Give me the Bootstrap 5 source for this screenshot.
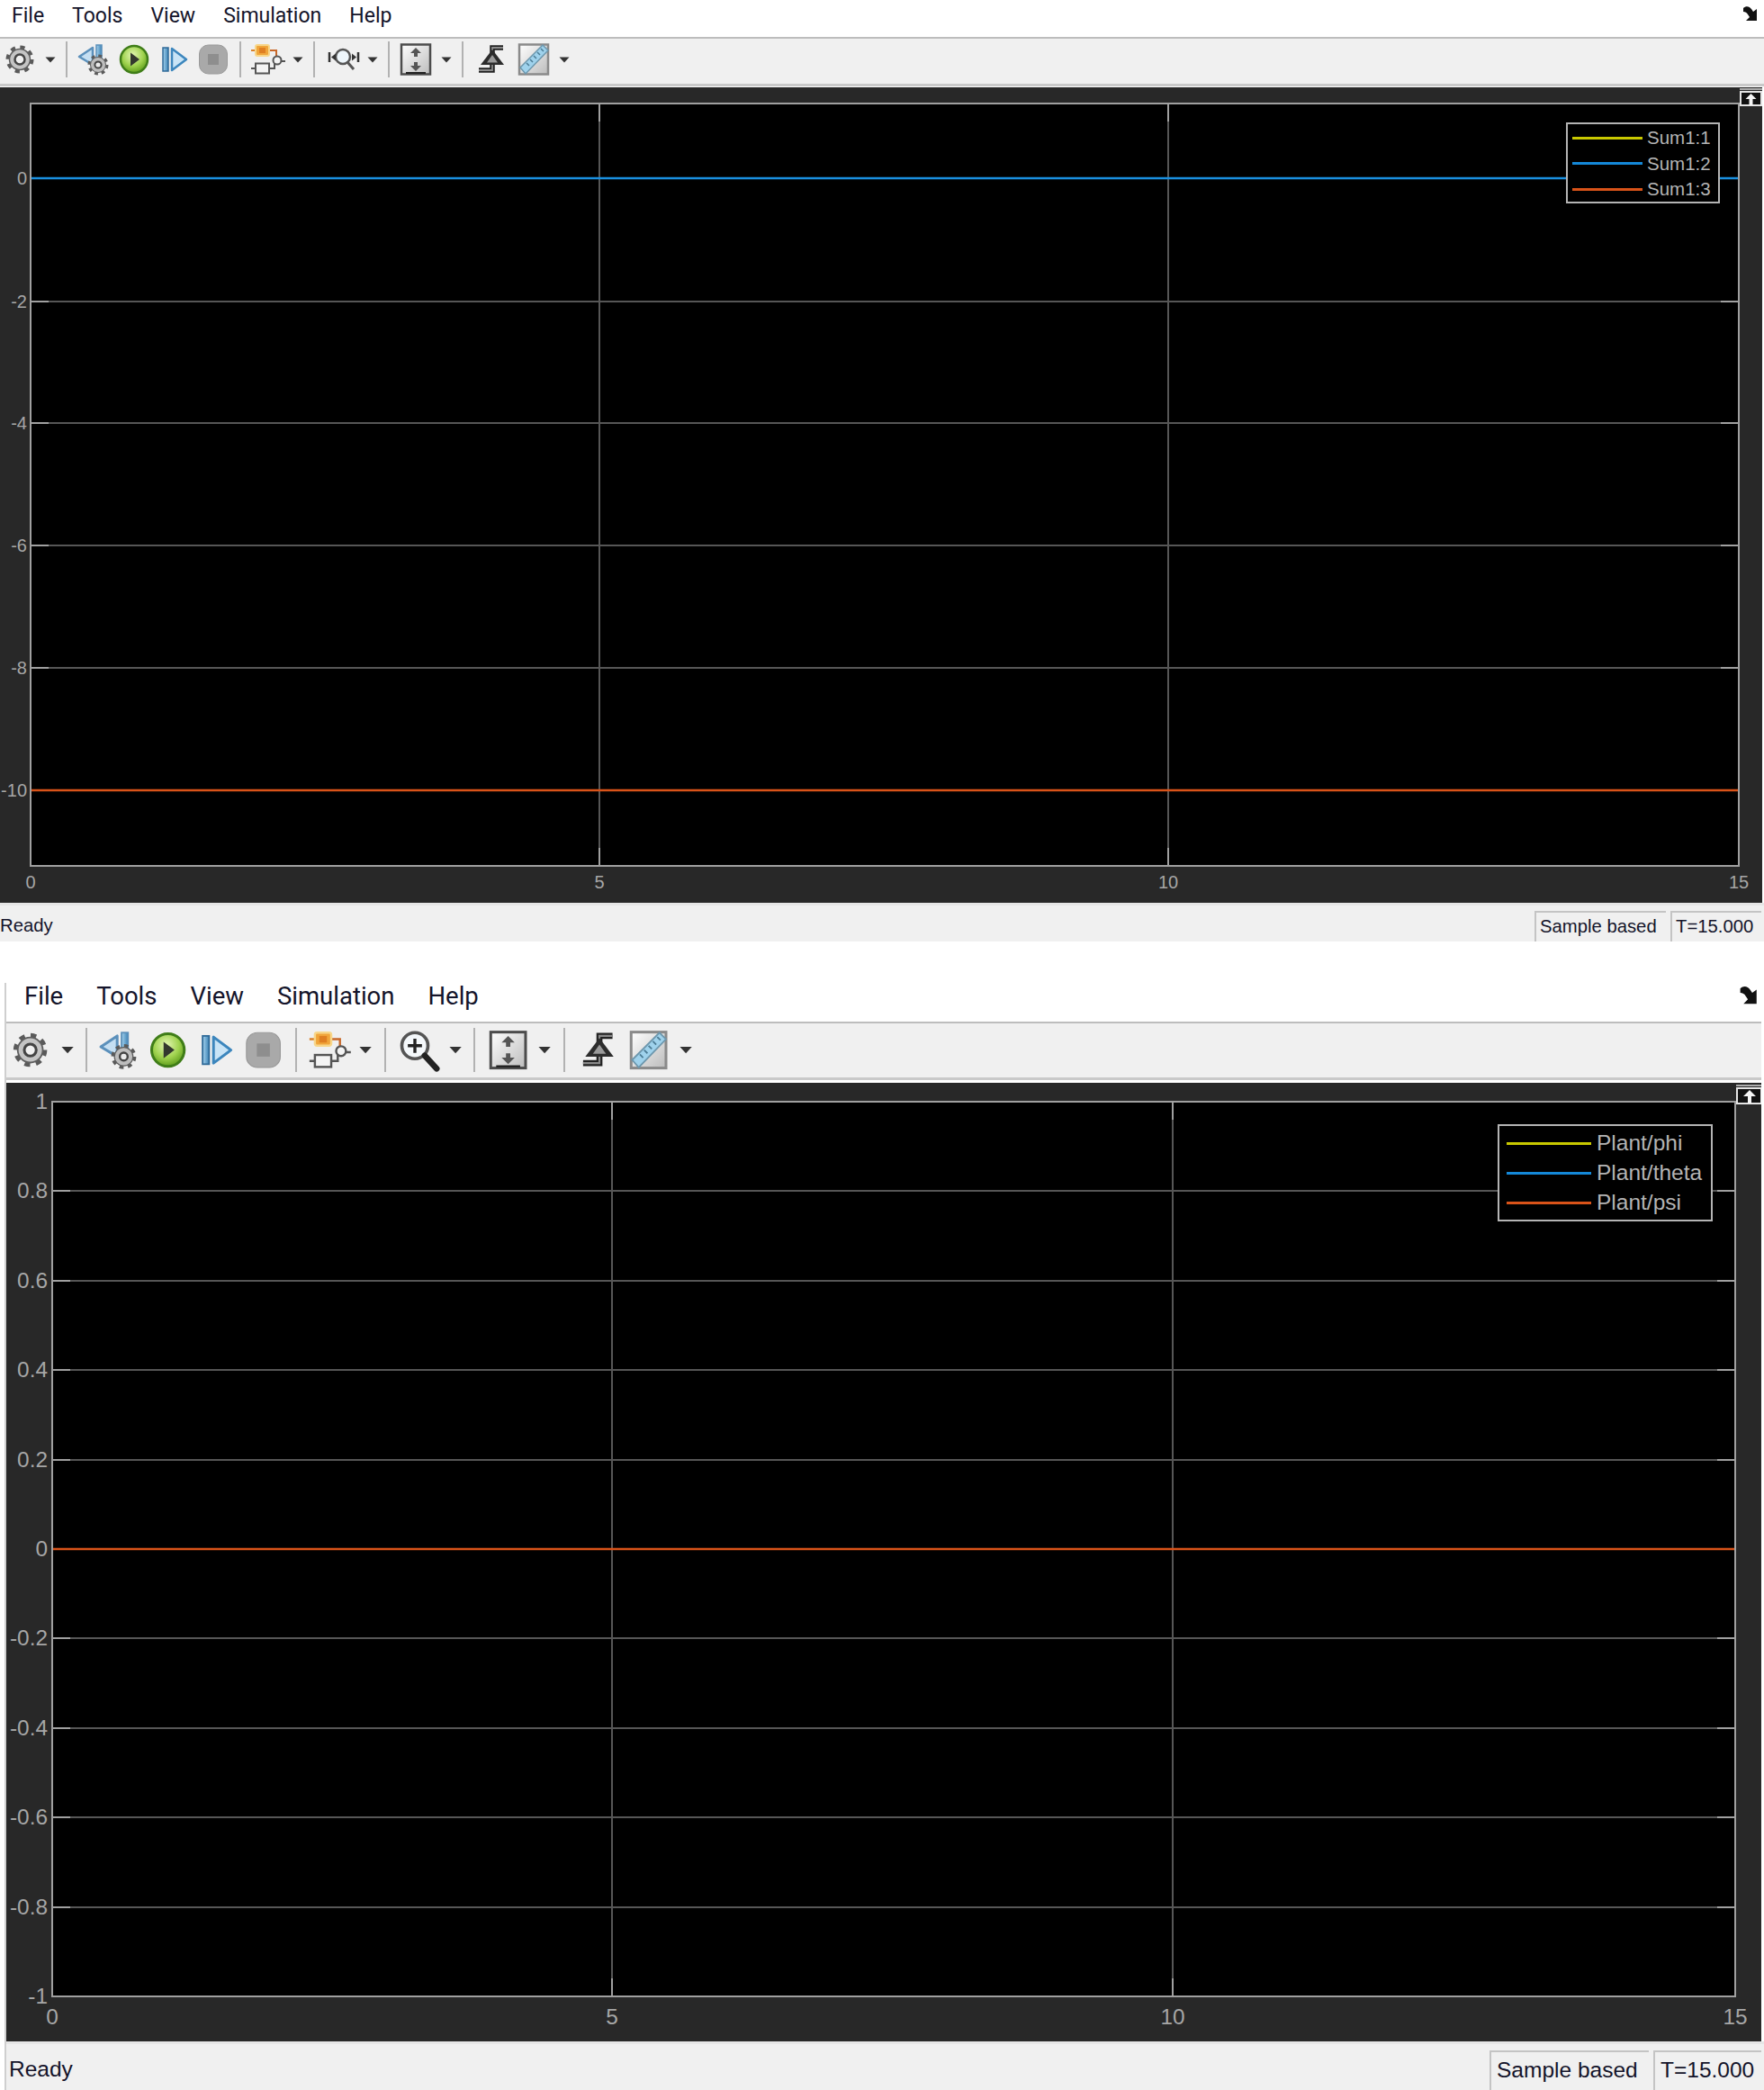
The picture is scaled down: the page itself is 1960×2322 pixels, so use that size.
<!DOCTYPE html>
<html lang="en">
<head>
  <meta charset="UTF-8">
  <meta name="viewport" content="width=device-width, initial-scale=1.0">
  <title>Scope</title>
  <link href="https://cdn.jsdelivr.net/npm/bootstrap@5.3.0/dist/css/bootstrap.min.css" rel="stylesheet">
  <style>
    body {
      margin: 0;
      background: #fff;
      font-family: "Liberation Sans", Arial, sans-serif;
    }
    /* both scopes share one layout, --k scales the chrome of the second */
    .scope-one {
      --k: 1;
      --menu-font: 23px;
      --menu-gap: 31px;
      --menu-h: 41px;
      --menu-lift: 6px;
      --tool-h: 55px;
      --tool-lift: 4px;
      --plot-h: 906px;
      --status-h: 40px;
      --status-font: 20.300px;
      width: 1960px;
    }
    .scope-two {
      --k: 1.210;
      --menu-font: 27.500px;
      --menu-gap: 37px;
      --menu-h: 43px;
      --menu-lift: 14px;
      --tool-h: 65px;
      --tool-lift: 1px;
      --plot-h: 1065px;
      --status-h: 51px;
      --status-font: 24.500px;
      width: 1952px;
      margin-top: 46px;
      margin-left: 5px;
      border-left: 2px solid #cfcfcf;
    }
    .menu-bar {
      height: var(--menu-h);
      padding-bottom: var(--menu-lift);
      gap: var(--menu-gap);
      font-family: Roboto, "Liberation Sans", sans-serif;
      font-size: var(--menu-font);
      line-height: 1;
    }
    .scope-one .menu-bar { padding-left: 13px; }
    .scope-two .menu-bar { padding-left: 20px; }
    .menu-bar .nav-link {
      padding: 0;
      color: #14142a;
    }
    .dock-arrow {
      width: calc(22px * var(--k));
      height: calc(22px * var(--k));
      align-self: flex-start;
    }
    .scope-one .dock-arrow { margin: 3px 4px 0 0; }
    .scope-two .dock-arrow { margin: -1px 0 0 0; }
    .tool-bar {
      height: var(--tool-h);
      padding-bottom: var(--tool-lift);
      background: #f0f0f0;
      border-top: 2px solid #bdbdbd;
      border-bottom: 3px solid #c9c9c9;
    }
    .tool-btn {
      width: calc(44px * var(--k));
      height: calc(44px * var(--k));
      flex: none;
      border-radius: 0;
    }
    .tool-btn svg { display: block; width: 100%; height: 100%; }
    .drop-btn {
      width: calc(20px * var(--k));
      height: calc(20px * var(--k));
      margin-left: calc(2px * var(--k));
      flex: none;
    }
    .drop-btn svg { display: block; width: 100%; height: 100%; }
    .tool-sep {
      width: 2px;
      height: calc(40px * var(--k));
      margin: 0 calc(7.500px * var(--k)) 0 calc(7px * var(--k));
      background: #b2b2b2;
      flex: none;
    }
    .plot-box {
      height: var(--plot-h);
      margin-top: 1px;
      background: #282828;
    }
    .scope-one .plot-box { width: 1958px; }
    .scope-two .plot-box { width: 1950px; margin-top: 3px; }
    .plot-box > svg { display: block; width: 100%; height: 100%; }
    .grid-line { stroke: #565656; stroke-width: 2; fill: none; }
    .tick-mark { stroke: #a0a0a0; stroke-width: 2; fill: none; }
    .tick-text { fill: #a6a6a6; font-family: "Liberation Sans", Arial, sans-serif; }
    .scope-one .tick-text { font-size: 20px; }
    .scope-two .tick-text { font-size: 24.400px; }
    .scope-legend {
      background: #000;
      border: 2px solid #b4b4b4;
      color: #b4b4b4;
      line-height: 1;
    }
    .scope-one .scope-legend {
      left: 1740px;
      top: 39px;
      width: 171px;
      height: 90px;
      padding: 1px 0 0 5px;
      font-size: 20.500px;
    }
    .scope-two .scope-legend {
      left: 1657px;
      top: 46px;
      width: 239px;
      height: 108px;
      padding: 3px 0 0 8px;
      font-size: 24.500px;
    }
    .scope-one .legend-row { height: 28.500px; gap: 5px; }
    .scope-two .legend-row { height: 33px; gap: 6px; }
    .legend-swatch { height: 3px; flex: none; }
    .scope-one .legend-swatch { width: 78px; }
    .scope-two .legend-swatch { width: 94px; }
    .status-row {
      height: var(--status-h);
      background: #f0f0f0;
      border-top: 3px solid #e6e6e6;
      box-sizing: content-box;
      color: #14142a;
      font-size: var(--status-font);
      line-height: 1;
    }
    .scope-one .status-row { width: 1960px; }
    .scope-two .status-row { width: 1950px; padding-left: 3px; }
    .status-ready { padding-top: 5px; }
    .status-cell {
      padding-bottom: 2px;
      border-top: 2px solid #c4c4c4;
      border-left: 2px solid #c4c4c4;
    }
    .scope-one .status-cell { height: 34px; margin-left: 5px; padding-left: 4px; }
    .scope-one .cell-mode { width: 146px; }
    .scope-one .cell-time { width: 101px; margin-right: 3px; }
    .scope-two .status-cell { height: 44px; margin-left: 5px; padding-left: 6px; }
    .scope-two .cell-mode { width: 177px; }
    .scope-two .cell-time { width: 120px; margin-right: 3px; }
  </style>
</head>
<body>

  <svg width="0" height="0" class="position-absolute">
    <defs>
      <radialGradient id="greenFill" cx="45%" cy="35%" r="65%">
        <stop offset="0" stop-color="#e4f7b4"/>
        <stop offset="0.6" stop-color="#9fd24e"/>
        <stop offset="1" stop-color="#5f9e1c"/>
      </radialGradient>
      <linearGradient id="greyFade" x1="0" y1="0" x2="1" y2="1">
        <stop offset="0" stop-color="#ffffff"/>
        <stop offset="1" stop-color="#bcbcbc"/>
      </linearGradient>
      <linearGradient id="blueBar" x1="0" y1="0" x2="1" y2="0">
        <stop offset="0" stop-color="#a6d3ee"/>
        <stop offset="1" stop-color="#3d83b5"/>
      </linearGradient>
      <symbol id="ico-caret" viewBox="0 0 20 20"><path d="M4.500 7.500h11l-5.500 6z" fill="#333"/></symbol>
      <symbol id="ico-gear" viewBox="0 0 44 44">
        <circle cx="22" cy="22" r="13" fill="none" stroke="#5a5a5a" stroke-width="5" stroke-dasharray="5 5.200"/>
        <circle cx="22" cy="22" r="11.500" fill="#c4c4c4" stroke="#5e5e5e" stroke-width="1.500"/>
        <circle cx="22" cy="22" r="5.500" fill="#f0f0f0" stroke="#444" stroke-width="2.500"/>
      </symbol>
      <symbol id="ico-back" viewBox="0 0 44 44">
        <path d="M5 19L20 9v19z" fill="#c5dff2" stroke="#5b90bb" stroke-width="2.500" stroke-linejoin="round"/>
        <rect x="24" y="6" width="6" height="19" fill="url(#blueBar)" stroke="#5b90bb" stroke-width="1.500"/>
        <circle cx="26" cy="28" r="9.500" fill="none" stroke="#5a5a5a" stroke-width="4" stroke-dasharray="3.700 3.760"/>
        <circle cx="26" cy="28" r="8.500" fill="#bdbdbd" stroke="#5e5e5e"/>
        <circle cx="26" cy="28" r="3.600" fill="#eaeaea" stroke="#444" stroke-width="2"/>
      </symbol>
      <symbol id="ico-play" viewBox="0 0 44 44">
        <circle cx="22" cy="22" r="15" fill="url(#greenFill)" stroke="#3f7d18" stroke-width="2.500"/>
        <path d="M18 14.500l10 7.500-10 7.500z" fill="#33382e"/>
      </symbol>
      <symbol id="ico-step" viewBox="0 0 44 44">
        <rect x="10" y="9" width="6" height="26" fill="url(#blueBar)" stroke="#2f6a98" stroke-width="1.500"/>
        <path d="M20 10l16 12-16 12z" fill="#c9e4f6" stroke="#3c86bd" stroke-width="2.500" stroke-linejoin="round"/>
      </symbol>
      <symbol id="ico-stop" viewBox="0 0 44 44">
        <rect x="6.500" y="6" width="31" height="32" rx="10" fill="#a9a9a9" stroke="#9a9a9a"/>
        <rect x="16" y="16" width="12" height="12" fill="#8e8e8e"/>
      </symbol>
      <symbol id="ico-library" viewBox="0 0 44 44">
        <path d="M24 12h8v9" fill="none" stroke="#c8682a" stroke-width="2"/>
        <path d="M4 12h5" fill="none" stroke="#d9822b" stroke-width="2"/>
        <rect x="9" y="6" width="15" height="12" rx="2" fill="#f0a53a" stroke="#f7d68a" stroke-width="2"/>
        <path d="M13 9h7v6h-7z" fill="#df7f22"/>
        <path d="M4 32h5M24 32h6v-7h1M37 24h5" fill="none" stroke="#555" stroke-width="2"/>
        <rect x="9" y="26.500" width="15" height="11" fill="#f4f4f4" stroke="#555" stroke-width="2"/>
        <circle cx="33" cy="23" r="4.500" fill="#f4f4f4" stroke="#555" stroke-width="2"/>
      </symbol>
      <symbol id="ico-zoomx" viewBox="0 0 44 44">
        <circle cx="23" cy="19" r="8" fill="#eef6fb" stroke="#555" stroke-width="2.500"/>
        <path d="M28 25l7 8" stroke="#555" stroke-width="3"/>
        <path d="M8 14v11M40 14v11" stroke="#333" stroke-width="2.500"/>
        <path d="M10 19.500l5-4v8zM38 19.500l-5-4v8z" fill="#333"/>
      </symbol>
      <symbol id="ico-zoomin" viewBox="0 0 44 44">
        <circle cx="19" cy="18" r="12" fill="#f4f8fb" stroke="#555" stroke-width="3"/>
        <path d="M28 27l11 12" stroke="#222" stroke-width="5.500" stroke-linecap="round"/>
        <path d="M19 11.500v13M12.500 18h13" stroke="#222" stroke-width="2.800"/>
      </symbol>
      <symbol id="ico-scale" viewBox="0 0 44 44">
        <rect x="6" y="5.500" width="32" height="33" fill="url(#greyFade)" stroke="#4c4c4c" stroke-width="2.500"/>
        <path d="M22 9l6 6h-4v4h-4v-4h-4z" fill="#555"/>
        <path d="M22 35l6-6h-4v-4h-4v4h-4z" fill="#555"/>
        <path d="M11 37h22" stroke="#222" stroke-width="2"/>
      </symbol>
      <symbol id="ico-signal" viewBox="0 0 44 44">
        <path d="M36 9H24V34H9" fill="none" stroke="#222" stroke-width="5.500"/>
        <path d="M36 9H24V34H9" fill="none" stroke="#8a8a8a" stroke-width="1.800"/>
        <path d="M24 11L11 28H37z" fill="#2c2c2c"/>
        <path d="M24 17L18 25.500H30z" fill="#9a9a9a"/>
      </symbol>
      <symbol id="ico-ruler" viewBox="0 0 44 44">
        <rect x="6" y="5.500" width="32" height="33" fill="url(#greyFade)" stroke="#8a8a8a" stroke-width="2.500"/>
        <path d="M7 31L32 6l6 6-25 26z" fill="#9fd2ec" stroke="#6d97ad" stroke-width="1.500"/>
        <path d="M14 26l3 3M18 22l3 3M22 18l3 3M26 14l3 3M30 10l3 3" stroke="#4d7d96" stroke-width="1.500"/>
      </symbol>
      <symbol id="ico-dock" viewBox="0 0 22 22">
        <path d="M3 6c3-3 7-2 9 1l2 3 4-3v13H6l4-4-2-3C7 11 5 10 3 10z" fill="#111"/>
      </symbol>
    </defs>
  </svg>

  <!-- first scope: Sum1 -->
  <section class="scope-one">
    <nav class="nav menu-bar align-items-center">
      <a class="nav-link" href="#">File</a>
      <a class="nav-link" href="#">Tools</a>
      <a class="nav-link" href="#">View</a>
      <a class="nav-link" href="#">Simulation</a>
      <a class="nav-link" href="#">Help</a>
      <svg class="dock-arrow ms-auto"><use href="#ico-dock"/></svg>
    </nav>
    <div class="tool-bar d-flex align-items-center">
      <button class="btn tool-btn p-0 border-0"><svg><use href="#ico-gear"/></svg></button>
      <span class="drop-btn"><svg><use href="#ico-caret"/></svg></span>
      <span class="tool-sep"></span>
      <button class="btn tool-btn p-0 border-0"><svg><use href="#ico-back"/></svg></button>
      <button class="btn tool-btn p-0 border-0"><svg><use href="#ico-play"/></svg></button>
      <button class="btn tool-btn p-0 border-0"><svg><use href="#ico-step"/></svg></button>
      <button class="btn tool-btn p-0 border-0"><svg><use href="#ico-stop"/></svg></button>
      <span class="tool-sep"></span>
      <button class="btn tool-btn p-0 border-0"><svg><use href="#ico-library"/></svg></button>
      <span class="drop-btn"><svg><use href="#ico-caret"/></svg></span>
      <span class="tool-sep"></span>
      <button class="btn tool-btn p-0 border-0"><svg><use href="#ico-zoomx"/></svg></button>
      <span class="drop-btn"><svg><use href="#ico-caret"/></svg></span>
      <span class="tool-sep"></span>
      <button class="btn tool-btn p-0 border-0"><svg><use href="#ico-scale"/></svg></button>
      <span class="drop-btn"><svg><use href="#ico-caret"/></svg></span>
      <span class="tool-sep"></span>
      <button class="btn tool-btn p-0 border-0"><svg><use href="#ico-signal"/></svg></button>
      <button class="btn tool-btn p-0 border-0 ms-1"><svg><use href="#ico-ruler"/></svg></button>
      <span class="drop-btn"><svg><use href="#ico-caret"/></svg></span>
    </div>
    <div class="plot-box position-relative">
      <svg viewBox="0 97 1958 906">
        <rect x="34" y="115" width="1898" height="847" fill="#000"/>
        <path class="grid-line" d="M34 198H1932M34 335H1932M34 470H1932M34 606H1932M34 742H1932M34 878H1932M666 115V962M1298 115V962"/>
        <path class="tick-mark" d="M34 335h20M34 470h20M34 606h20M34 742h20M34 878h20M1932 335h-20M1932 470h-20M1932 606h-20M1932 742h-20M666 962v-20M1298 962v-20M666 115v20M1298 115v20"/>
        <path d="M34 198H1932" stroke="#1a90e0" stroke-width="2.500"/>
        <path d="M34 878H1932" stroke="#d95319" stroke-width="2.500"/>
        <rect x="34" y="115" width="1898" height="847" fill="none" stroke="#a0a0a0" stroke-width="2"/>
        <g class="tick-text" text-anchor="end">
          <text x="30" y="205">0</text>
          <text x="30" y="342">-2</text>
          <text x="30" y="477">-4</text>
          <text x="30" y="613">-6</text>
          <text x="30" y="749">-8</text>
          <text x="30" y="885">-10</text>
        </g>
        <g class="tick-text" text-anchor="middle">
          <text x="34" y="987">0</text>
          <text x="666" y="987">5</text>
          <text x="1298" y="987">10</text>
          <text x="1932" y="987">15</text>
        </g>
        <g>
          <path d="M1933 99H1958" stroke="#d8d8d8" stroke-width="1.500"/>
          <rect x="1934" y="102" width="23" height="15" fill="#111" stroke="#e4e4e4" stroke-width="2"/>
          <path d="M1945.500 104l-6 6h4v7h4v-7h4z" fill="#f4f4f4"/>
        </g>
      </svg>
      <div class="scope-legend position-absolute">
        <div class="legend-row d-flex align-items-center"><span class="legend-swatch" style="background:#c8c800"></span>Sum1:1</div>
        <div class="legend-row d-flex align-items-center"><span class="legend-swatch" style="background:#1488d8"></span>Sum1:2</div>
        <div class="legend-row d-flex align-items-center"><span class="legend-swatch" style="background:#d95319"></span>Sum1:3</div>
      </div>
    </div>
    <div class="status-row d-flex align-items-end">
      <span class="status-ready me-auto align-self-center">Ready</span>
      <span class="status-cell cell-mode d-flex align-items-center">Sample based</span>
      <span class="status-cell cell-time d-flex align-items-center">T=15.000</span>
    </div>
  </section>

  <!-- second scope: Plant -->
  <section class="scope-two">
    <nav class="nav menu-bar align-items-center">
      <a class="nav-link" href="#">File</a>
      <a class="nav-link" href="#">Tools</a>
      <a class="nav-link" href="#">View</a>
      <a class="nav-link" href="#">Simulation</a>
      <a class="nav-link" href="#">Help</a>
      <svg class="dock-arrow ms-auto"><use href="#ico-dock"/></svg>
    </nav>
    <div class="tool-bar d-flex align-items-center">
      <button class="btn tool-btn p-0 border-0"><svg><use href="#ico-gear"/></svg></button>
      <span class="drop-btn"><svg><use href="#ico-caret"/></svg></span>
      <span class="tool-sep"></span>
      <button class="btn tool-btn p-0 border-0"><svg><use href="#ico-back"/></svg></button>
      <button class="btn tool-btn p-0 border-0"><svg><use href="#ico-play"/></svg></button>
      <button class="btn tool-btn p-0 border-0"><svg><use href="#ico-step"/></svg></button>
      <button class="btn tool-btn p-0 border-0"><svg><use href="#ico-stop"/></svg></button>
      <span class="tool-sep"></span>
      <button class="btn tool-btn p-0 border-0"><svg><use href="#ico-library"/></svg></button>
      <span class="drop-btn"><svg><use href="#ico-caret"/></svg></span>
      <span class="tool-sep"></span>
      <button class="btn tool-btn p-0 border-0"><svg><use href="#ico-zoomin"/></svg></button>
      <span class="drop-btn"><svg><use href="#ico-caret"/></svg></span>
      <span class="tool-sep"></span>
      <button class="btn tool-btn p-0 border-0"><svg><use href="#ico-scale"/></svg></button>
      <span class="drop-btn"><svg><use href="#ico-caret"/></svg></span>
      <span class="tool-sep"></span>
      <button class="btn tool-btn p-0 border-0"><svg><use href="#ico-signal"/></svg></button>
      <button class="btn tool-btn p-0 border-0 ms-1"><svg><use href="#ico-ruler"/></svg></button>
      <span class="drop-btn"><svg><use href="#ico-caret"/></svg></span>
    </div>
    <div class="plot-box position-relative">
      <svg viewBox="7 1203 1950 1065">
        <rect x="58" y="1224" width="1870" height="994" fill="#000"/>
        <path class="grid-line" d="M58 1323H1928M58 1423H1928M58 1522H1928M58 1622H1928M58 1721H1928M58 1820H1928M58 1920H1928M58 2019H1928M58 2119H1928M680 1224V2218M1303 1224V2218"/>
        <path class="tick-mark" d="M58 1323h20M58 1423h20M58 1522h20M58 1622h20M58 1820h20M58 1920h20M58 2019h20M58 2119h20M1928 1323h-20M1928 1423h-20M1928 1522h-20M1928 1622h-20M1928 1820h-20M1928 1920h-20M1928 2019h-20M1928 2119h-20M680 2218v-20M1303 2218v-20M680 1224v20M1303 1224v20"/>
        <path d="M58 1721H1928" stroke="#d95319" stroke-width="2.500"/>
        <rect x="58" y="1224" width="1870" height="994" fill="none" stroke="#a0a0a0" stroke-width="2"/>
        <g class="tick-text" text-anchor="end">
          <text x="53" y="1232">1</text>
          <text x="53" y="1331">0.8</text>
          <text x="53" y="1431">0.6</text>
          <text x="53" y="1530">0.4</text>
          <text x="53" y="1630">0.2</text>
          <text x="53" y="1729">0</text>
          <text x="53" y="1828">-0.2</text>
          <text x="53" y="1928">-0.4</text>
          <text x="53" y="2027">-0.6</text>
          <text x="53" y="2127">-0.8</text>
          <text x="53" y="2226">-1</text>
        </g>
        <g class="tick-text" text-anchor="middle">
          <text x="58" y="2249">0</text>
          <text x="680" y="2249">5</text>
          <text x="1303" y="2249">10</text>
          <text x="1928" y="2249">15</text>
        </g>
        <g>
          <path d="M1929 1206H1957" stroke="#d8d8d8" stroke-width="1.500"/>
          <rect x="1930" y="1209" width="27" height="17" fill="#111" stroke="#e4e4e4" stroke-width="2"/>
          <path d="M1944 1211l-7 7h5v8h4v-8h5z" fill="#f4f4f4"/>
        </g>
      </svg>
      <div class="scope-legend position-absolute">
        <div class="legend-row d-flex align-items-center"><span class="legend-swatch" style="background:#c8c800"></span>Plant/phi</div>
        <div class="legend-row d-flex align-items-center"><span class="legend-swatch" style="background:#1488d8"></span>Plant/theta</div>
        <div class="legend-row d-flex align-items-center"><span class="legend-swatch" style="background:#d95319"></span>Plant/psi</div>
      </div>
    </div>
    <div class="status-row d-flex align-items-end">
      <span class="status-ready me-auto align-self-center">Ready</span>
      <span class="status-cell cell-mode d-flex align-items-center">Sample based</span>
      <span class="status-cell cell-time d-flex align-items-center">T=15.000</span>
    </div>
  </section>

  <script src="https://cdn.jsdelivr.net/npm/bootstrap@5.3.0/dist/js/bootstrap.bundle.min.js"></script>
</body>
</html>
